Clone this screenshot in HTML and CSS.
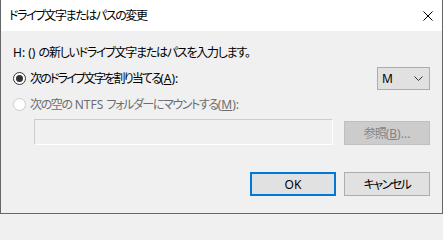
FILE: index.html
```html
<!DOCTYPE html>
<html lang="ja">
<head>
<meta charset="utf-8">
<title>ドライブ文字またはパスの変更</title>
<link rel="stylesheet" href="styles.css">
</head>
<body>
<div class="window">
  <div class="titlebar">
    <span class="title">ドライブ文字またはパスの変更</span>
    <svg class="close" width="10" height="10" viewBox="0 0 10 10"><path d="M0.5 0.5L9.5 9.5M9.5 0.5L0.5 9.5" stroke="#000" stroke-width="1" fill="none"/></svg>
  </div>
  <div class="content">
    <div class="desc"><span class="lat">H: () </span>の新しいドライブ文字またはパスを入力します。</div>
    <div class="row assign">
      <label class="radio">
        <svg width="13" height="13" viewBox="0 0 13 13"><circle cx="6.5" cy="6.5" r="6" fill="#fff" stroke="#333" stroke-width="1"/><circle cx="6.5" cy="6.5" r="3.5" fill="#333"/></svg>
        <span class="label-assign">次のドライブ文字を割り当てる<span class="lat">(<u>A</u>):</span></span>
      </label>
      <div class="select">
        <span>M</span>
        <svg width="9" height="5" viewBox="0 0 9 5"><path d="M0.5 0.5L4.5 4.5L8.5 0.5" stroke="#333" stroke-width="1" fill="none"/></svg>
      </div>
    </div>
    <div class="row mount">
      <label class="radio disabled">
        <svg width="13" height="13" viewBox="0 0 13 13"><circle cx="6.5" cy="6.5" r="6" fill="#fff" stroke="#cccccc" stroke-width="1"/></svg>
        <span class="label-mount">次の空の<span class="lat"> NTFS </span>フォルダーにマウントする<span class="lat">(<u>M</u>):</span></span>
      </label>
    </div>
    <div class="row path">
      <div class="textbox"></div>
      <div class="btn disabled">参照<span class="lat">(<u>B</u>)...</span></div>
    </div>
    <div class="row actions">
      <div class="btn default">OK</div>
      <div class="btn kana">キャンセル</div>
    </div>
  </div>
</div>
</body>
</html>
```
FILE: styles.css
```css
html, body {
  margin: 0;
  padding: 0;
  background: #f0f0f0;
}
.window {
  width: 443px;
  height: 214px;
  box-sizing: border-box;
  border: 1px solid #666;
  border-top: none;
  background: #f0f0f0;
  font-family: "Noto Sans", "Noto Sans CJK JP", sans-serif;
  font-size: 12px;
  font-feature-settings: "palt";
  color: #000;
  display: flex;
  flex-direction: column;
}
.titlebar {
  height: 31px;
  background: #fff;
  display: flex;
  align-items: center;
  justify-content: space-between;
  padding: 0 9px 0 8px;
  flex-shrink: 0;
}
.title {
  line-height: 15px;
  letter-spacing: -1.4px;
}
.content {
  padding: 14px 12px 0 12px;
  display: flex;
  flex-direction: column;
}
.desc {
  line-height: 15px;
  height: 15px;
  letter-spacing: -1.25px;
}
.lat {
  letter-spacing: 0;
}
.row {
  display: flex;
  align-items: center;
}
.assign {
  margin-top: 7px;
  justify-content: space-between;
  height: 22px;
}
.radio {
  display: flex;
  align-items: center;
  gap: 4px;
  line-height: 15px;
}
.label-assign {
  letter-spacing: -1.8px;
}
.label-mount {
  letter-spacing: -1.4px;
}
.radio svg {
  display: block;
}
.disabled {
  color: #6d6d6d;
}
.select {
  width: 53px;
  height: 23px;
  box-sizing: border-box;
  border: 1px solid #adadad;
  background: #e1e1e1;
  display: flex;
  align-items: center;
  justify-content: space-between;
  padding: 0 6px 0 4px;
}
.select svg {
  display: block;
}
.mount {
  margin-top: 8px;
  height: 15px;
}
.path {
  margin-top: 7px;
  padding-left: 21px;
  align-items: flex-end;
  justify-content: space-between;
}
.textbox {
  width: 299px;
  height: 26px;
  box-sizing: border-box;
  border: 1px solid;
  border-color: #cccccc #ffffff #ffffff #cccccc;
  background: #f0f0f0;
}
.btn {
  width: 86px;
  height: 24px;
  box-sizing: border-box;
  border: 1px solid #adadad;
  background: #e1e1e1;
  display: flex;
  align-items: center;
  justify-content: center;
  line-height: 15px;
}
.btn.disabled {
  background: #cccccc;
  border-color: #bfbfbf;
  color: #838383;
  letter-spacing: -1px;
}
.btn.kana {
  letter-spacing: -1.5px;
}
.btn.default {
  border: 2px solid #0078d7;
}
.actions {
  margin-top: 27px;
  justify-content: flex-end;
  gap: 8px;
}
```
